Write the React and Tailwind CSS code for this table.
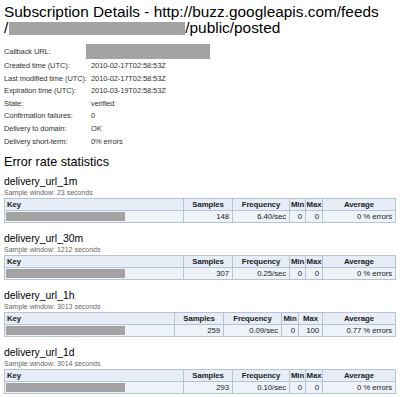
import React from 'react';

const font = { fontFamily: "'Liberation Sans', Arial, sans-serif" };

const details = [
  ['Created time (UTC):', '2010-02-17T02:58:53Z'],
  ['Last modified time (UTC):', '2010-02-17T02:58:53Z'],
  ['Expiration time (UTC):', '2010-03-19T02:58:53Z'],
  ['State:', 'verified'],
  ['Confirmation failures:', '0'],
  ['Delivery to domain:', 'OK'],
  ['Delivery short-term:', '0% errors'],
];

const wide = [179, 49, 57, 16, 17, 73];

const stats = [
  { name: 'delivery_url_1m', window: '23 seconds', samples: 148, freq: '6.40/sec', min: 0, max: 0, avg: '0 % errors', cols: wide },
  { name: 'delivery_url_30m', window: '1212 seconds', samples: 307, freq: '0.25/sec', min: 0, max: 0, avg: '0 % errors', cols: wide },
  { name: 'delivery_url_1h', window: '3013 seconds', samples: 259, freq: '0.09/sec', min: 0, max: 100, avg: '0.77 % errors', cols: [170, 49, 58, 17, 24, 73] },
  { name: 'delivery_url_1d', window: '3014 seconds', samples: 293, freq: '0.10/sec', min: 0, max: 0, avg: '0 % errors', cols: wide },
];

const StatTable = ({ s }) => {
  const cell = 'border border-[#b7c2d2] p-0 h-[11px] leading-[11px] text-[7.8px] tracking-[-0.1px] text-[#222] whitespace-nowrap overflow-hidden';
  const th = `${cell} font-bold bg-[#e6edf7] text-center`;
  const td = `${cell} bg-[#eef3fa] text-right pr-[3px]`;
  return (
    <table className="border-collapse table-fixed w-[391px]">
      <colgroup>
        {s.cols.map((w, i) => (
          <col key={i} style={{ width: w }} />
        ))}
      </colgroup>
      <thead>
        <tr>
          <th className={`${cell} font-bold bg-[#e6edf7] text-left pl-[2px]`}>Key</th>
          <th className={th}>Samples</th>
          <th className={th}>Frequency</th>
          <th className={th}>Min</th>
          <th className={th}>Max</th>
          <th className={th}>Average</th>
        </tr>
      </thead>
      <tbody>
        <tr>
          <td className={`${cell} bg-[#eef3fa] pl-[1px]`}>
            <div className="w-[119px] h-[9px] bg-[#a3a3a3]" />
          </td>
          <td className={td}>{s.samples}</td>
          <td className={td}>{s.freq}</td>
          <td className={td}>{s.min}</td>
          <td className={td}>{s.max}</td>
          <td className={td}>{s.avg}</td>
        </tr>
      </tbody>
    </table>
  );
};

export default function App() {
  return (
    <div className="w-[400px] h-[397px] overflow-hidden bg-white px-[4px] pt-[4px] text-[#111]" style={font}>
      {/* Title */}
      <h1 className="text-[15.4px] leading-[16px] font-normal text-black whitespace-nowrap">
        <div>Subscription Details - http://buzz.googleapis.com/feeds</div>
        <div className="flex items-center">
          <span>/</span>
          <span className="inline-block w-[176px] h-[13px] bg-[#a3a3a3] ml-[1px]" />
          <span>/public/posted</span>
        </div>
      </h1>

      {/* Details */}
      <div className="mt-[7px] flex flex-col text-[7.5px] tracking-[-0.1px] text-[#333] whitespace-nowrap">
        <div className="flex items-center h-[16.4px]">
          <div className="w-[82px] shrink-0">Callback URL:</div>
          <div className="w-[124px] h-[15px] bg-[#a3a3a3]" />
        </div>
        {details.map(([label, value]) => (
          <div key={label} className="flex items-center h-[12.6px]">
            <div className="w-[87px] shrink-0">{label}</div>
            <div>{value}</div>
          </div>
        ))}
      </div>

      {/* Error rate statistics */}
      <h2 className="mt-[7px] text-[12.6px] leading-[14px] text-black">Error rate statistics</h2>

      <div className="mt-[6px] flex flex-col gap-[9px]">
        {stats.map((s) => (
          <div key={s.name}>
            <h3 className="text-[10.4px] leading-[13px] text-black">{s.name}</h3>
            <div className="text-[7px] leading-[10px] text-[#666]">Sample window: {s.window}</div>
            <StatTable s={s} />
          </div>
        ))}
      </div>
    </div>
  );
}
